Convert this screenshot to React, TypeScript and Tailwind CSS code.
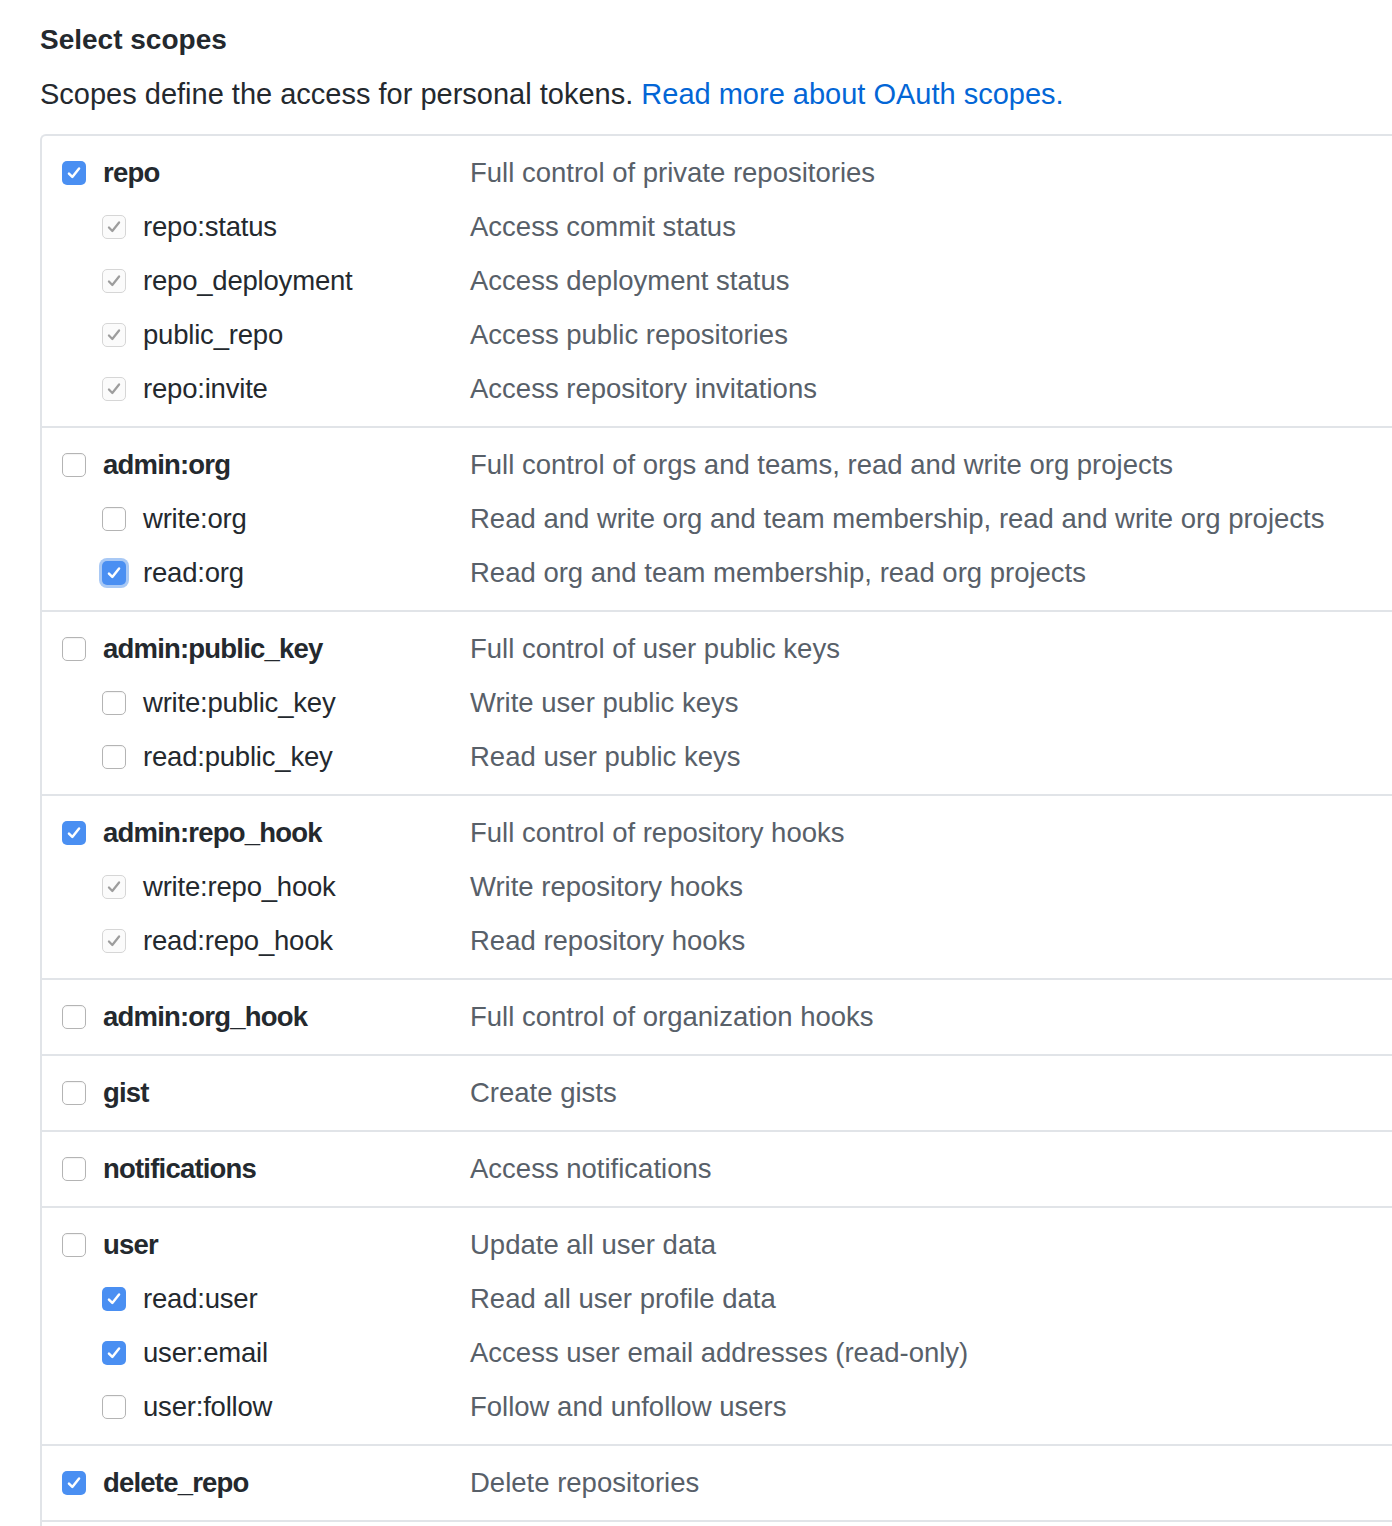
import React from "react";

type CheckState = "on" | "off" | "implied" | "focused";

type Scope = {
  name: string;
  desc: string;
  state: CheckState;
  parent?: boolean;
};

const groups: Scope[][] = [
  [
    { name: "repo", desc: "Full control of private repositories", state: "on", parent: true },
    { name: "repo:status", desc: "Access commit status", state: "implied" },
    { name: "repo_deployment", desc: "Access deployment status", state: "implied" },
    { name: "public_repo", desc: "Access public repositories", state: "implied" },
    { name: "repo:invite", desc: "Access repository invitations", state: "implied" },
  ],
  [
    { name: "admin:org", desc: "Full control of orgs and teams, read and write org projects", state: "off", parent: true },
    { name: "write:org", desc: "Read and write org and team membership, read and write org projects", state: "off" },
    { name: "read:org", desc: "Read org and team membership, read org projects", state: "focused" },
  ],
  [
    { name: "admin:public_key", desc: "Full control of user public keys", state: "off", parent: true },
    { name: "write:public_key", desc: "Write user public keys", state: "off" },
    { name: "read:public_key", desc: "Read user public keys", state: "off" },
  ],
  [
    { name: "admin:repo_hook", desc: "Full control of repository hooks", state: "on", parent: true },
    { name: "write:repo_hook", desc: "Write repository hooks", state: "implied" },
    { name: "read:repo_hook", desc: "Read repository hooks", state: "implied" },
  ],
  [{ name: "admin:org_hook", desc: "Full control of organization hooks", state: "off", parent: true }],
  [{ name: "gist", desc: "Create gists", state: "off", parent: true }],
  [{ name: "notifications", desc: "Access notifications", state: "off", parent: true }],
  [
    { name: "user", desc: "Update all user data", state: "off", parent: true },
    { name: "read:user", desc: "Read all user profile data", state: "on" },
    { name: "user:email", desc: "Access user email addresses (read-only)", state: "on" },
    { name: "user:follow", desc: "Follow and unfollow users", state: "off" },
  ],
  [{ name: "delete_repo", desc: "Delete repositories", state: "on", parent: true }],
];

function Check({ state }: { state: CheckState }) {
  if (state === "off") {
    return (
      <span className="block h-[24px] w-[24px] rounded-[5px] border border-[#b4b4b4] bg-white shadow-[inset_0_1px_1px_rgba(0,0,0,0.05)]" />
    );
  }
  if (state === "implied") {
    return (
      <span className="flex h-[24px] w-[24px] items-center justify-center rounded-[5px] border border-[#d6d6d6] bg-[#fbfbfb]">
        <svg width="18" height="18" viewBox="0 0 16 16" fill="none">
          <path d="M3.5 8.5l3 3 6-7.5" stroke="#9d9d9d" strokeWidth="2" strokeLinecap="round" strokeLinejoin="round" />
        </svg>
      </span>
    );
  }
  return (
    <span
      className={`flex h-[24px] w-[24px] items-center justify-center rounded-[5px] bg-[#4a8ff2] ${
        state === "focused" ? "shadow-[0_0_0_3px_#a9c9f5]" : ""
      }`}
    >
      <svg width="18" height="18" viewBox="0 0 16 16" fill="none">
        <path d="M3.5 8.5l3 3 6-7.5" stroke="#ffffff" strokeWidth="2.2" strokeLinecap="round" strokeLinejoin="round" />
      </svg>
    </span>
  );
}

export default function App() {
  return (
    <div
      className="min-h-[1526px] overflow-hidden bg-white pl-[40px] pt-[19px] text-[27.5px] text-[#24292e]"
      style={{ fontFamily: '"Liberation Sans", Arial, sans-serif' }}
    >
      <h3 className="text-[28px] font-bold leading-[42px]">Select scopes</h3>
      <p className="mt-[12px] text-[29px] leading-[42px]">
        Scopes define the access for personal tokens.{" "}
        <a className="text-[#0366d6]" href="#">
          Read more about OAuth scopes.
        </a>
      </p>

      <div className="mt-[19px] rounded-tl-[6px] border-l-2 border-t-2 border-[#e1e4e8] pb-[20px]">
        {groups.map((group, gi) => (
          <div key={gi} className="border-b-2 border-[#e1e4e8] py-[10px]">
            {group.map((s) => (
              <div key={s.name} className="flex h-[54px] items-center pl-[20px]">
                <div className={`flex w-[408px] items-center ${s.parent ? "" : "pl-[40px]"}`}>
                  <Check state={s.state} />
                  <span className={`ml-[17px] ${s.parent ? "font-bold tracking-[-0.8px]" : "tracking-[-0.2px]"}`}>
                    {s.name}
                  </span>
                </div>
                <span className="whitespace-nowrap text-[#586069]">{s.desc}</span>
              </div>
            ))}
          </div>
        ))}
      </div>
    </div>
  );
}
